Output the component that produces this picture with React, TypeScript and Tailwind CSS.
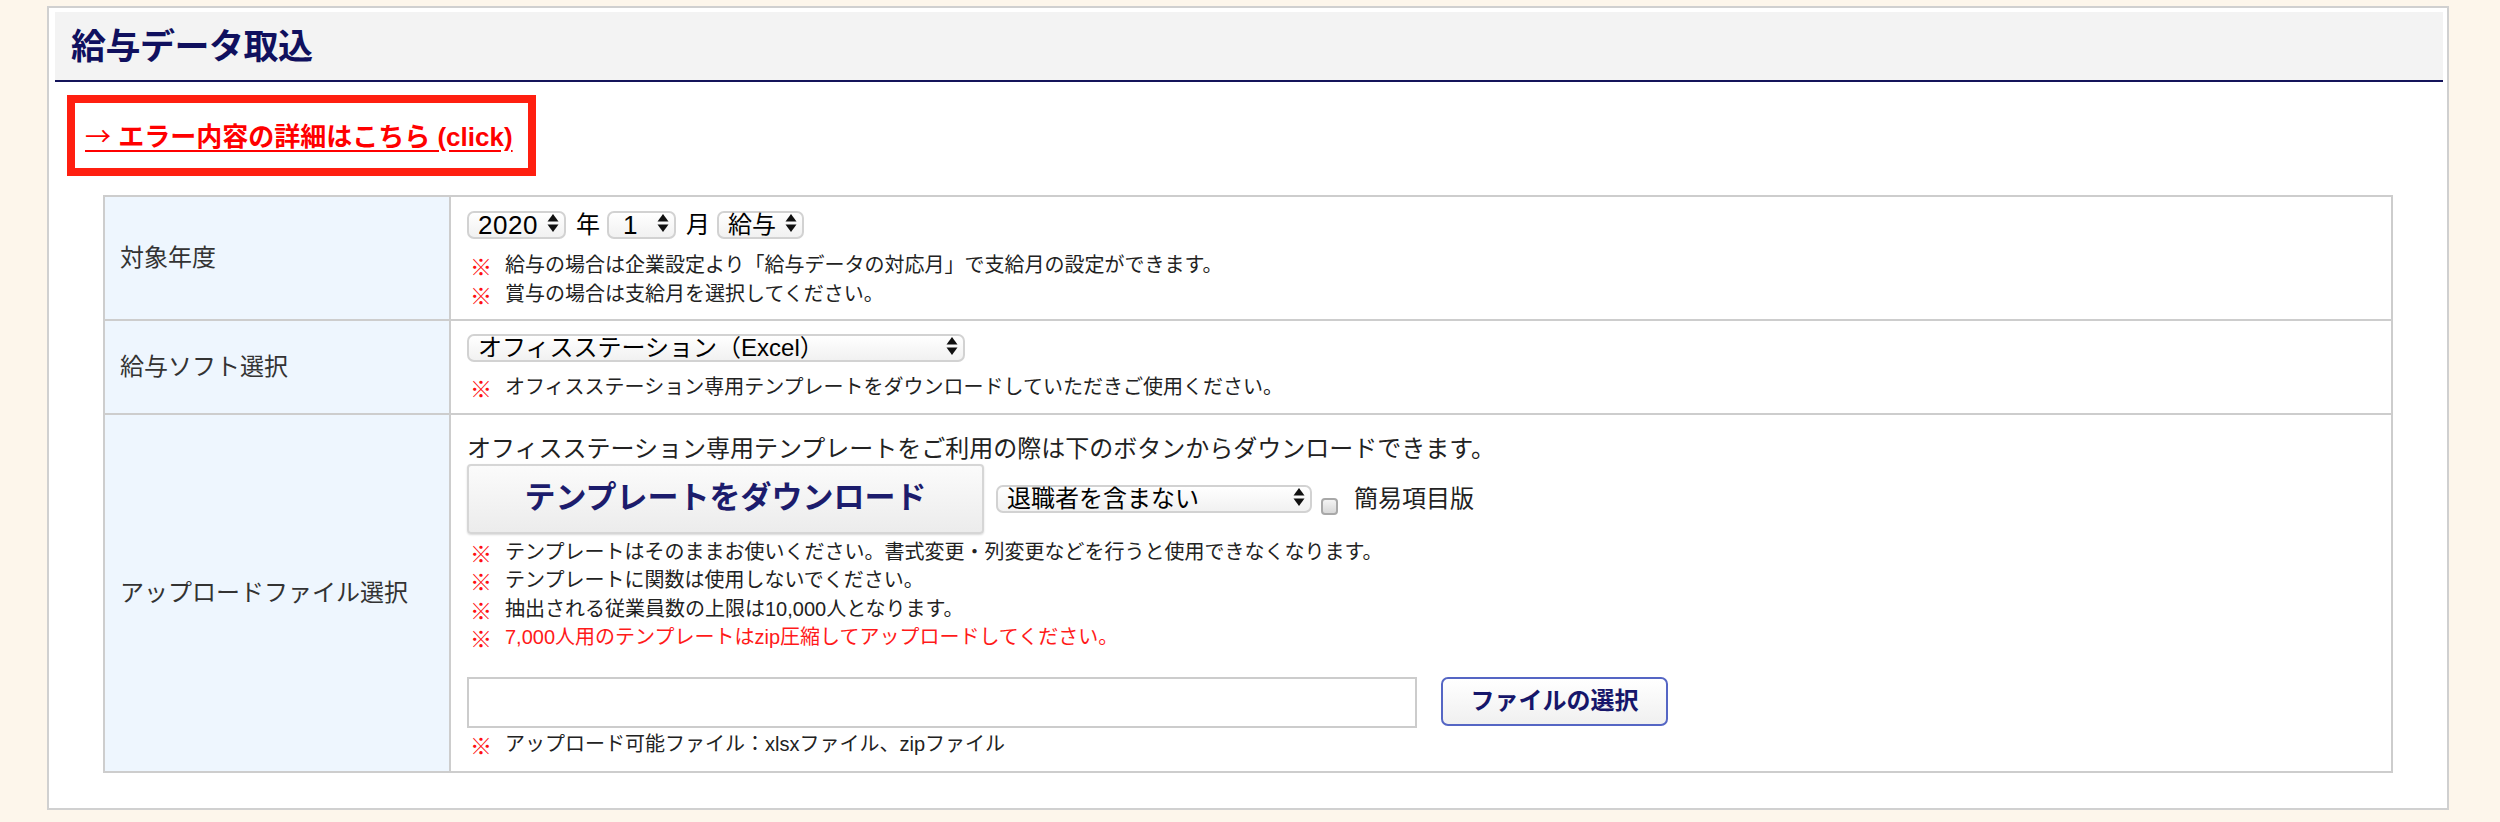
import React from 'react';

const FONT = "font-['Liberation_Sans','Noto_Sans_CJK_JP',sans-serif]";

// up / down arrow pair used by the select boxes
function Arrows() {
  return (
    <svg width="12" height="18" viewBox="0 0 12 18" className="shrink-0">
      <path d="M6 0 L11.5 7.5 H0.5 Z" fill="#111" />
      <path d="M6 18 L11.5 10.5 H0.5 Z" fill="#111" />
    </svg>
  );
}

function FakeSelect({ value, className, textClass = 'text-[24px]' }: { value: string; className: string; textClass?: string }) {
  return (
    <div
      className={`flex h-[28px] shrink-0 items-start justify-between rounded-[7px] border-2 border-[#d2d2d2] bg-linear-to-b from-white to-[#f1f1f1] pl-[9px] pr-[5px] ${className}`}
    >
      <span className={`whitespace-nowrap leading-[24px] text-black ${textClass}`}>{value}</span>
      <span className="pt-[1px]">
        <Arrows />
      </span>
    </div>
  );
}

function Note({ children, red }: { children: React.ReactNode; red?: boolean }) {
  return (
    <div className={`flex h-[28.5px] items-center text-[20px] leading-[28px] ${red ? 'text-[#ff1a1a]' : 'text-[#222]'}`}>
      <span className="ml-[3px] w-[22px] font-['Noto_Sans_CJK_JP',sans-serif] text-[22px] font-bold text-[#ff1010]">※</span>
      <span className="ml-[13px] whitespace-nowrap">{children}</span>
    </div>
  );
}

function Row({ label, children }: { label: string; children: React.ReactNode }) {
  return (
    <div className="flex border-b-2 border-[#cdcdcd]">
      <div className="flex w-[346px] shrink-0 items-center border-r-2 border-[#cdcdcd] bg-[#eef6fe] pl-[15px] text-[24px] text-[#333]">
        {label}
      </div>
      <div className="min-w-0 flex-1 border-r-2 border-[#cdcdcd] pl-[16px]">{children}</div>
    </div>
  );
}

export default function App() {
  return (
    <div className={`min-h-[822px] bg-[#fdf6eb] pt-[6px] ${FONT}`}>
      <div className="ml-[47px] mr-[51px] border-2 border-[#d0d0d0] bg-white pb-[35px] pl-[6px] pr-[4px] pt-[4px]">
        {/* header */}
        <div className="flex h-[70px] items-center border-b-2 border-[#14145a] bg-[#f3f3f3] pl-[16px]">
          <h1 className="text-[35px] font-bold leading-none tracking-[-0.5px] text-[#10105e]">給与データ取込</h1>
        </div>

        {/* error link */}
        <div className="ml-[12px] mt-[13px] flex h-[81px] w-[469px] items-center border-[8px] border-[#ff1f10] pl-[10px]">
          <a href="#" className="text-[26px] font-bold leading-none text-[#ff0000] underline underline-offset-[4px]">
            <span className="font-['Noto_Sans_CJK_JP',sans-serif] font-normal">→</span> エラー内容の詳細はこちら (click)
          </a>
        </div>

        {/* form table */}
        <div className="ml-[48px] mr-[50px] mt-[19px] border-l-2 border-t-2 border-[#cdcdcd]">
          <Row label="対象年度">
            <div className="pb-[11px] pt-[14px]">
              <div className="flex items-center text-[24px] text-black">
                <FakeSelect value="2020" className="w-[99px]" textClass="text-[26px] tracking-[0.5px]" />
                <span className="ml-[10px] leading-[28px]">年</span>
                <FakeSelect value="1" className="ml-[7px] w-[69px] pl-[14px]" textClass="text-[26px]" />
                <span className="ml-[10px] leading-[28px]">月</span>
                <FakeSelect value="給与" className="ml-[7px] w-[87px]" />
              </div>
              <div className="mt-[12px]">
                <Note>給与の場合は企業設定より「給与データの対応月」で支給月の設定ができます。</Note>
                <Note>賞与の場合は支給月を選択してください。</Note>
              </div>
            </div>
          </Row>

          <Row label="給与ソフト選択">
            <div className="pb-[11px] pt-[13px]">
              <FakeSelect value="オフィスステーション（Excel）" className="w-[498px]" />
              <div className="mt-[11px]">
                <Note>オフィスステーション専用テンプレートをダウンロードしていただきご使用ください。</Note>
              </div>
            </div>
          </Row>

          <Row label="アップロードファイル選択">
            <div className="pb-[13px] pt-[19px]">
              <p className="text-[24px] leading-[30px] text-[#222]">
                オフィスステーション専用テンプレートをご利用の際は下のボタンからダウンロードできます。
              </p>
              <div className="flex items-center">
                <button className="flex h-[70px] w-[517px] shrink-0 items-center justify-center rounded-[4px] border-2 border-[#d6d6d6] bg-linear-to-b from-[#fbfbfb] to-[#ececec] text-[31px] font-bold text-[#1c1c6c] shadow-[0_1px_2px_rgba(0,0,0,0.15)]">
                  テンプレートをダウンロード
                </button>
                <FakeSelect value="退職者を含まない" className="ml-[12px] w-[316px]" />
                <span className="ml-[9px] mt-[15px] h-[17px] w-[17px] shrink-0 rounded-[4px] border-2 border-[#a8a8a8] bg-linear-to-b from-[#f4f4f4] to-[#d8d8d8]" />
                <span className="ml-[16px] text-[24px] leading-[28px] text-[#222]">簡易項目版</span>
              </div>
              <div className="mt-[4px]">
                <Note>テンプレートはそのままお使いください。書式変更・列変更などを行うと使用できなくなります。</Note>
                <Note>テンプレートに関数は使用しないでください。</Note>
                <Note>抽出される従業員数の上限は10,000人となります。</Note>
                <Note red>7,000人用のテンプレートはzip圧縮してアップロードしてください。</Note>
              </div>
              <div className="mt-[25px] flex items-start">
                <div className="h-[51px] w-[950px] shrink-0 border-2 border-[#cccccc] bg-white" />
                <button className="ml-[24px] flex h-[49px] w-[227px] shrink-0 items-center justify-center rounded-[7px] border-2 border-[#5566c4] bg-linear-to-b from-white to-[#f0f0f0] text-[24px] font-bold text-[#16166a]">
                  ファイルの選択
                </button>
              </div>
              <div className="mt-[2px]">
                <Note>アップロード可能ファイル：xlsxファイル、zipファイル</Note>
              </div>
            </div>
          </Row>
        </div>
      </div>
    </div>
  );
}
